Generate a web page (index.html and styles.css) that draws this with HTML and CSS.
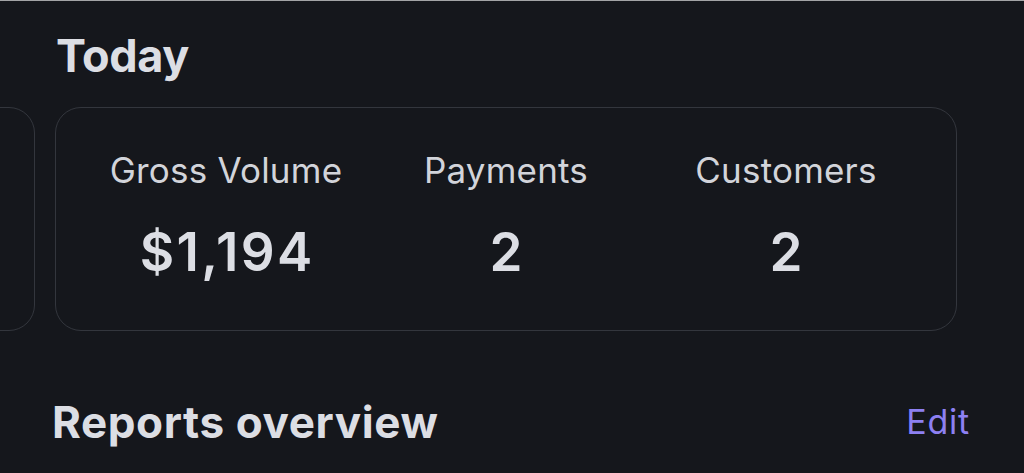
FILE: index.html
```html
<!DOCTYPE html>
<html lang="en">
<head>
<meta charset="utf-8">
<title>Today</title>
<link rel="stylesheet" href="styles.css">
</head>
<body>
<main class="screen">
  <h2 class="section-title">Today</h2>
  <div class="carousel">
    <div class="card card-ghost"></div>
    <div class="card">
      <div class="stat">
        <span class="stat-label">Gross Volume</span>
        <span class="stat-value">$1,194</span>
      </div>
      <div class="stat">
        <span class="stat-label">Payments</span>
        <span class="stat-value">2</span>
      </div>
      <div class="stat">
        <span class="stat-label">Customers</span>
        <span class="stat-value">2</span>
      </div>
    </div>
  </div>
  <div class="reports-header">
    <h2 class="reports-title">Reports overview</h2>
    <a class="edit-link" href="#">Edit</a>
  </div>
</main>
</body>
</html>
```

FILE: styles.css
```css
html, body {
  margin: 0;
  padding: 0;
  height: 100%;
}

body {
  background: #15171c;
  border-top: 1px solid #a3a4a6;
  box-sizing: border-box;
  overflow: hidden;
  font-family: "Inter", "Noto Sans", sans-serif;
  color: #dadce2;
}

.screen {
  display: flex;
  flex-direction: column;
}

.section-title {
  margin: 0;
  padding: 28px 0 0 56px;
  font-size: 45px;
  line-height: 54px;
  font-weight: 700;
  letter-spacing: -0.4px;
  color: #dcdee4;
}

.carousel {
  display: flex;
  gap: 20px;
  margin-top: 24px;
  margin-left: -867px;
}

.card {
  flex: 0 0 902px;
  height: 224px;
  box-sizing: border-box;
  border: 1.5px solid #33363d;
  border-radius: 26px;
  padding: 42px 30px 0;
  display: grid;
  grid-template-columns: repeat(3, 1fr);
  align-items: start;
}

.stat {
  display: flex;
  flex-direction: column;
  align-items: center;
  gap: 32px;
}

.stat-label {
  font-size: 35px;
  line-height: 40px;
  font-weight: 400;
  color: #d2d4da;
  letter-spacing: 0.2px;
}

.stat-value {
  font-size: 53px;
  line-height: 60px;
  font-weight: 600;
  color: #dcdee4;
  letter-spacing: 2.4px;
  padding-left: 2.4px;
}

.reports-header {
  display: flex;
  align-items: center;
  justify-content: space-between;
  margin-top: 64px;
  padding: 0 54px 0 52px;
}

.reports-title {
  margin: 0;
  font-size: 44px;
  line-height: 54px;
  font-weight: 700;
  letter-spacing: 0.6px;
  color: #dcdee4;
}

.edit-link {
  font-size: 34px;
  line-height: 40px;
  font-weight: 400;
  color: #8d80f2;
  letter-spacing: 0.8px;
  text-decoration: none;
}
```
